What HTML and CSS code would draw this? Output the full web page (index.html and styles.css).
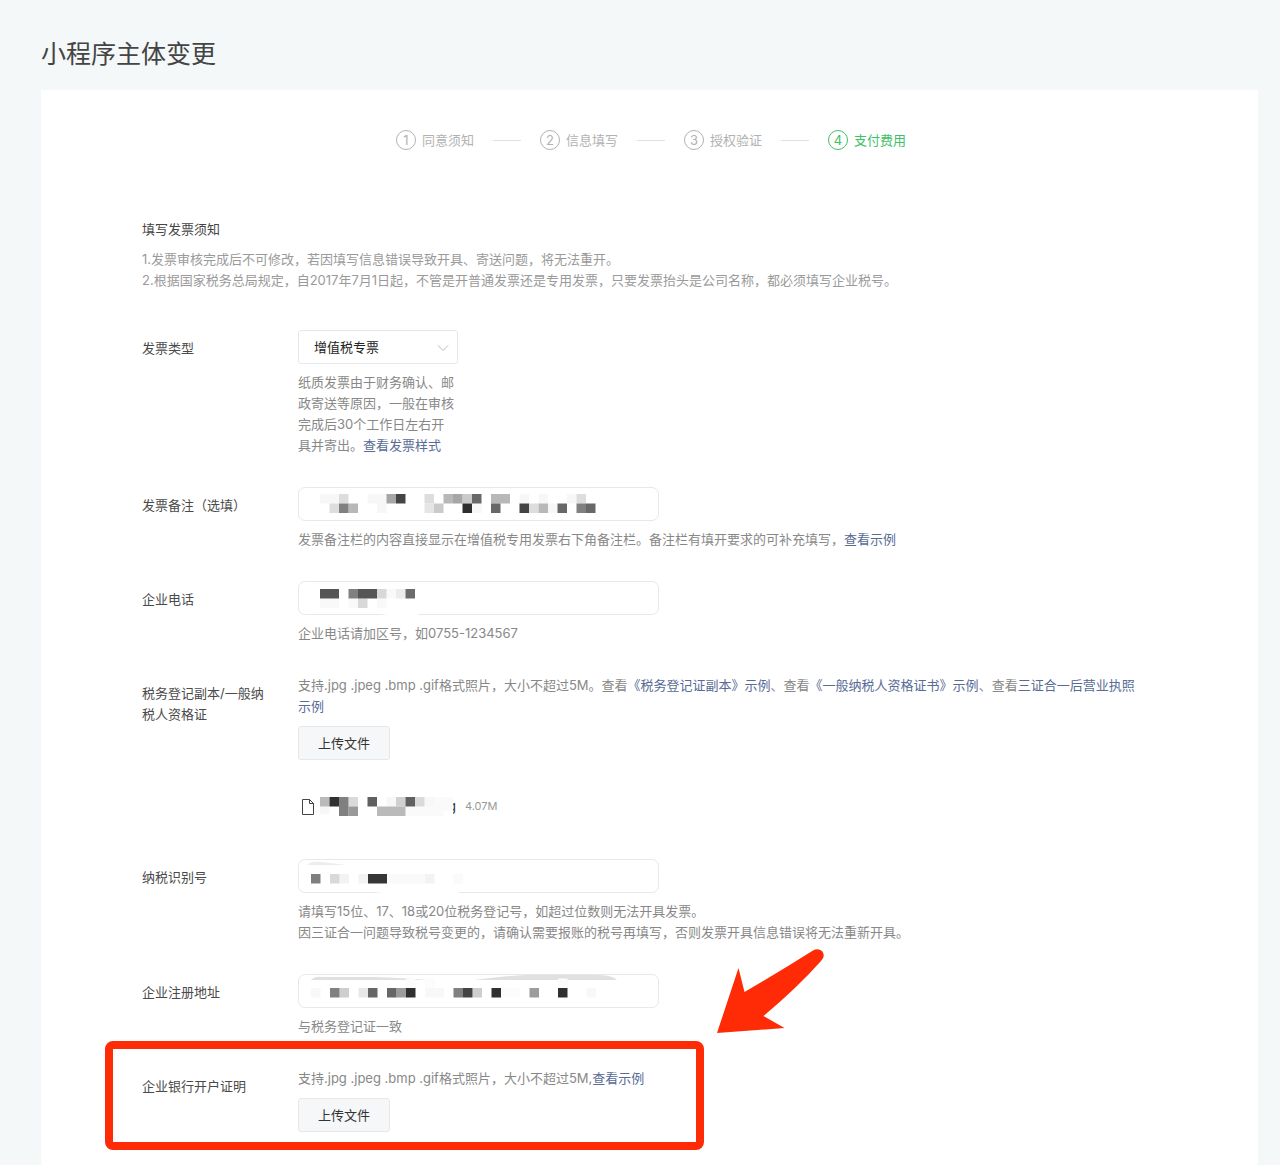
FILE: index.html
```html
<!DOCTYPE html>
<html lang="zh-CN">

<head>
    <meta charset="UTF-8">
    <meta name="viewport" content="width=device-width, initial-scale=1.0">
    <title>小程序主体变更</title>
    <link rel="stylesheet" href="styles.css">
</head>

<body>
    <h1 class="page-title">小程序主体变更</h1>

    <main class="card">
        <ol class="steps">
            <li class="step"><span class="step-num">1</span>同意须知</li>
            <li class="step"><span class="step-num">2</span>信息填写</li>
            <li class="step"><span class="step-num">3</span>授权验证</li>
            <li class="step active"><span class="step-num">4</span>支付费用</li>
        </ol>

        <section class="notice">
            <h2>填写发票须知</h2>
            <p>1.发票审核完成后不可修改，若因填写信息错误导致开具、寄送问题，将无法重开。</p>
            <p>2.根据国家税务总局规定，自2017年7月1日起，不管是开普通发票还是专用发票，只要发票抬头是公司名称，都必须填写企业税号。</p>
        </section>

        <form class="invoice-form">
            <div class="form-row">
                <label class="form-label" for="invoiceType">发票类型</label>
                <div class="form-content">
                    <div class="select-box">
                        <select id="invoiceType">
                            <option>增值税专票</option>
                        </select>
                        <svg class="arrow-down" width="12" height="8" viewBox="0 0 12 8"><path d="M1 1.500l5 5 5-5" fill="none" stroke="#b5b8bb"/></svg>
                    </div>
                    <p class="help help-narrow">纸质发票由于财务确认、邮政寄送等原因，一般在审核完成后30个工作日左右开具并寄出。<a href="#">查看发票样式</a></p>
                </div>
            </div>

            <div class="form-row">
                <label class="form-label" for="remark">发票备注（选填）</label>
                <div class="form-content">
                    <div class="input-box">
                        <input type="text" id="remark" class="form-control">
                        <svg class="mask" viewBox="0 0 361 34">
                            <g transform="translate(22 7) scale(9.5)">
                                <path fill="#f7f7f7" d="M0 0h2v1h-2zM5 0h2v1h-2zM6 1h1v1h-1zM16 1h1v1h-1zM21 0h1v1h-1zM23 0h1v1h-1zM24 1h1v1h-1zM26 0h1v1h-1z"/>
                                <path fill="#ddd" d="M2 0h1v1h-1zM1 1h1v1h-1zM11 0h1v1h-1zM22 1h1v1h-1zM27 0h1v1h-1z"/>
                                <path fill="#e5e5e5" d="M11 1h1v1h-1z"/>
                                <path fill="#cacaca" d="M12 1h1v1h-1zM15 0h1v1h-1z"/>
                                <path fill="#b8b8b8" d="M3 1h1v1h-1zM13 0h1v1h-1zM18 0h2v1h-2zM23 1h1v1h-1z"/>
                                <path fill="#a6a6a6" d="M7 0h1v1h-1zM14 0h1v1h-1z"/>
                                <path fill="#808080" d="M2 1h1v1h-1zM27 1h1v1h-1z"/>
                                <path fill="#686868" d="M16 0h1v1h-1zM18 1h1v1h-1zM25 1h1v1h-1zM28 1h1v1h-1z"/>
                                <path fill="#444" d="M8 0h1v1h-1zM21 1h1v1h-1z"/>
                                <path fill="#2e2e2e" d="M15 1h1v1h-1z"/>
                            </g>
                        </svg>
                    </div>
                    <p class="help">发票备注栏的内容直接显示在增值税专用发票右下角备注栏。备注栏有填开要求的可补充填写，<a href="#">查看示例</a></p>
                </div>
            </div>

            <div class="form-row">
                <label class="form-label" for="phone">企业电话</label>
                <div class="form-content">
                    <div class="input-box">
                        <input type="text" id="phone" class="form-control">
                        <svg class="mask" viewBox="0 0 361 34">
                            <path fill="#fff" d="M82 34q18-3 38-2v2z"/>
                            <g transform="translate(22 8) scale(9.5)">
                                <path fill="#f9f9f9" d="M0 1h2v1h-2zM3 1h1v1h-1zM6 1h1v1h-1zM7 0h1v1h-1z"/>
                                <path fill="#ececec" d="M8 0h1v1h-1z"/>
                                <path fill="#d8d8d8" d="M6 0h1v1h-1zM4 1h1v1h-1z"/>
                                <path fill="#808080" d="M3 0h1v1h-1z"/>
                                <path fill="#6b6b6b" d="M9 0h1v1h-1z"/>
                                <path fill="#555" d="M0 0h2v1h-2zM4 0h2v1h-2z"/>
                            </g>
                        </svg>
                    </div>
                    <p class="help">企业电话请加区号，如0755-1234567</p>
                </div>
            </div>

            <div class="form-row">
                <label class="form-label" for="taxUpload">税务登记副本/一般纳税人资格证</label>
                <div class="form-content">
                    <p class="tip">支持.jpg .jpeg .bmp .gif格式照片，大小不超过5M。查看<a href="#">《税务登记证副本》示例</a>、查看<a href="#">《一般纳税人资格证书》示例</a>、查看<a href="#">三证合一后营业执照<br>示例</a></p>
                    <button type="button" class="btn" id="taxUpload">上传文件</button>
                    <div class="file">
                        <svg class="file-icon" width="14" height="18" viewBox="0 0 14 18"><path d="M1.500 1.500h7l4 4v11h-11zM8.500 1.500v4h4" fill="none" stroke="#444" stroke-linejoin="round"/></svg>
                        <svg class="file-mask" width="133" height="19" viewBox="0 0 14 2">
                            <path fill="#f7f7f7" d="M0 1h1v.8h-1zM7 0h1v1h-1zM11 0h1v1h-1z"/>
                            <path fill="#fafafa" d="M9 1h4v1h-4zM12 0h2v1.500h-2z"/>
                            <path fill="#dadada" d="M3 0h1v1h-1zM10 0h1v1h-1z"/>
                            <path fill="#d0d0d0" d="M8 0h1v1h-1z"/>
                            <path fill="#bababa" d="M0 0h1v1h-1zM6 1h3v1h-3z"/>
                            <path fill="#999" d="M3 1h1v1h-1z"/>
                            <path fill="#808080" d="M2 0h1v2h-1z"/>
                            <path fill="#606060" d="M5 0h1v1h-1zM9 0h1v1h-1z"/>
                            <path fill="#303030" d="M1 0h1v1h-1z"/>
                        </svg>
                        <span class="file-name">g</span>
                        <span class="file-size">4.07M</span>
                    </div>
                </div>
            </div>

            <div class="form-row">
                <label class="form-label" for="taxNo">纳税识别号</label>
                <div class="form-content">
                    <div class="input-box">
                        <input type="text" id="taxNo" class="form-control">
                        <svg class="mask" viewBox="0 0 361 34">
                            <path fill="#ededed" d="M9 6q4-4 14-3l26 3z"/>
                            <path fill="#fff" d="M75 34q40-4 86-2v2z"/>
                            <g transform="translate(13 15) scale(9.5)">
                                <path fill="#fafafa" d="M8 0h4v1h-4zM15 0h1v1h-1z"/>
                                <path fill="#f3f3f3" d="M3 0h1v1h-1zM5 0h1v1h-1zM12 0h1v1h-1z"/>
                                <path fill="#d9d9d9" d="M2 0h1v1h-1z"/>
                                <path fill="#7f7f7f" d="M0 0h1v1h-1z"/>
                                <path fill="#363636" d="M6 0h2v1h-2z"/>
                            </g>
                        </svg>
                    </div>
                    <p class="help">请填写15位、17、18或20位税务登记号，如超过位数则无法开具发票。<br>因三证合一问题导致税号变更的，请确认需要报账的税号再填写，否则发票开具信息错误将无法重新开具。</p>
                </div>
            </div>

            <div class="form-row">
                <label class="form-label" for="address">企业注册地址</label>
                <div class="form-content">
                    <div class="input-box">
                        <input type="text" id="address" class="form-control">
                        <svg class="mask" viewBox="0 0 361 34">
                            <path fill="#e0e0e0" d="M13 6q4-4 12-3h50q30 1 55 3zM176 6q30-4 52-5h70q17 0 21 5z"/>
                            <g transform="translate(13 14) scale(9.5)">
                                <path fill="#f8f8f8" d="M0 0h1v1h-1zM12 0h2v1h-2zM29 0h1v1h-1z"/>
                                <path fill="#fcfcfc" d="M10 -1h1v1h-1zM12 -1h1v1h-1zM20 0h2v1h-2zM26 -1h1v1h-1z"/>
                                <path fill="#e8e8e8" d="M5 0h1v1h-1z"/>
                                <path fill="#cecece" d="M3 0h1v1h-1zM17 0h1v1h-1z"/>
                                <path fill="#9c9c9c" d="M9 0h1v1h-1zM23 0h1v1h-1z"/>
                                <path fill="#808080" d="M2 0h1v1h-1zM15 0h1v1h-1z"/>
                                <path fill="#666" d="M6 0h1v1h-1zM8 0h1v1h-1z"/>
                                <path fill="#444" d="M16 0h1v1h-1z"/>
                                <path fill="#303030" d="M10 0h1v1h-1zM19 0h1v1h-1zM26 0h1v1h-1z"/>
                            </g>
                        </svg>
                    </div>
                    <p class="help">与税务登记证一致</p>
                </div>
            </div>

            <div class="form-row marked">
                <label class="form-label" for="bankUpload">企业银行开户证明</label>
                <div class="form-content">
                    <p class="tip">支持.jpg .jpeg .bmp .gif格式照片，大小不超过5M,<a href="#">查看示例</a></p>
                    <button type="button" class="btn" id="bankUpload">上传文件</button>
                </div>
                <!-- 标注红框和箭头 -->
                <div class="mark-box"></div>
                <svg class="mark-arrow" width="108" height="86" viewBox="0 0 108 86"><path d="M0 84L21.500 19L27.500 43Q62 23 96 1.500Q101-1 105 2Q109 7 104 12Q80 39 46.500 67L67.500 79Z" fill="#ff2b06"/></svg>
            </div>
        </form>
    </main>
</body>

</html>
```

FILE: styles.css
```css
* {
    margin: 0;
    padding: 0;
    box-sizing: border-box;
    font-family: Inter, 'Noto Sans CJK SC', sans-serif;
}

body {
    display: flex;
    flex-direction: column;
    min-height: 100vh;
    padding: 35px 22px 0 41px;
    background-color: #f4f8f9;
    color: #4a4a4a;
    font-size: 13px;
    line-height: 21px;
}

a {
    color: #576b95;
    text-decoration: none;
}

a:hover {
    text-decoration: underline;
}

.page-title {
    margin-bottom: 17px;
    color: #444;
    font-size: 25px;
    font-weight: 400;
    line-height: 38px;
}

.card {
    flex: 1;
    padding: 40px 101px 33px;
    background-color: #fff;
    border-radius: 2px;
}

/* 步骤条 */
.steps {
    display: flex;
    justify-content: center;
    padding-left: 3px;
    list-style: none;
    line-height: 20px;
    color: #b2b2b2;
}

.step {
    display: flex;
    align-items: center;
}

.step + .step::before {
    content: "";
    width: 28px;
    height: 1px;
    margin: 0 19px;
    background-color: #e0e0e0;
}

.step-num {
    width: 20px;
    height: 20px;
    margin-right: 6px;
    border: 1px solid currentColor;
    border-radius: 50%;
    line-height: 18px;
    text-align: center;
}

.step.active {
    color: #3fc168;
}

.notice {
    margin: 69px 0 39px;
    color: #9a9a9a;
}

.notice h2 {
    margin-bottom: 9px;
    color: #444;
    font-size: 13px;
    font-weight: 400;
}

/* 表单 */
.form-row {
    display: flex;
    gap: 26px;
}

.form-row + .form-row {
    margin-top: 31px;
}

.form-label {
    flex: none;
    width: 130px;
    padding-top: 8px;
}

.form-content {
    flex: 1;
    min-width: 0;
}

.help {
    margin-top: 8px;
    color: #888;
}

.help-narrow {
    width: 158px;
}

.tip {
    margin-bottom: 9px;
    color: #888;
}

.select-box {
    position: relative;
    width: 160px;
}

.select-box select {
    display: block;
    width: 100%;
    height: 34px;
    padding: 0 15px;
    border: 1px solid #e4e8eb;
    border-radius: 3px;
    background-color: #fff;
    color: #222;
    font-size: 13px;
    appearance: none;
}

.arrow-down {
    position: absolute;
    top: 14px;
    right: 9px;
    pointer-events: none;
}

.input-box {
    position: relative;
    max-width: 361px;
}

.form-control {
    display: block;
    width: 100%;
    height: 34px;
    padding: 0 12px;
    border: 1px solid #e6e8ea;
    border-radius: 7px;
    background-color: #fff;
    font-size: 13px;
    outline: none;
}

.mask {
    position: absolute;
    top: 0;
    left: 0;
    width: 100%;
    height: 34px;
    pointer-events: none;
}

.btn {
    display: block;
    height: 34px;
    padding: 0 19px 2px;
    border: 1px solid #e5e7e9;
    border-radius: 3px;
    background-color: #f6f7f9;
    color: #333;
    font-size: 13px;
    cursor: pointer;
}

.file {
    display: flex;
    align-items: center;
    margin-top: 36px;
    padding: 0 0 11px 3px;
}

.file-icon {
    margin-right: 5px;
}

.file-mask {
    z-index: 1;
    background-color: #fff;
}

.file-name {
    margin: 0 9px 0 -5px;
    color: #333;
}

.file-size {
    color: #999;
    font-size: 11px;
}

/* 标注 */
.marked {
    position: relative;
}

.mark-box {
    position: absolute;
    top: -27px;
    left: -37px;
    width: 599px;
    height: 109px;
    border: 8px solid #ff2b06;
    border-radius: 8px;
    pointer-events: none;
}

.mark-arrow {
    position: absolute;
    top: -119px;
    left: 575px;
    pointer-events: none;
}
```
